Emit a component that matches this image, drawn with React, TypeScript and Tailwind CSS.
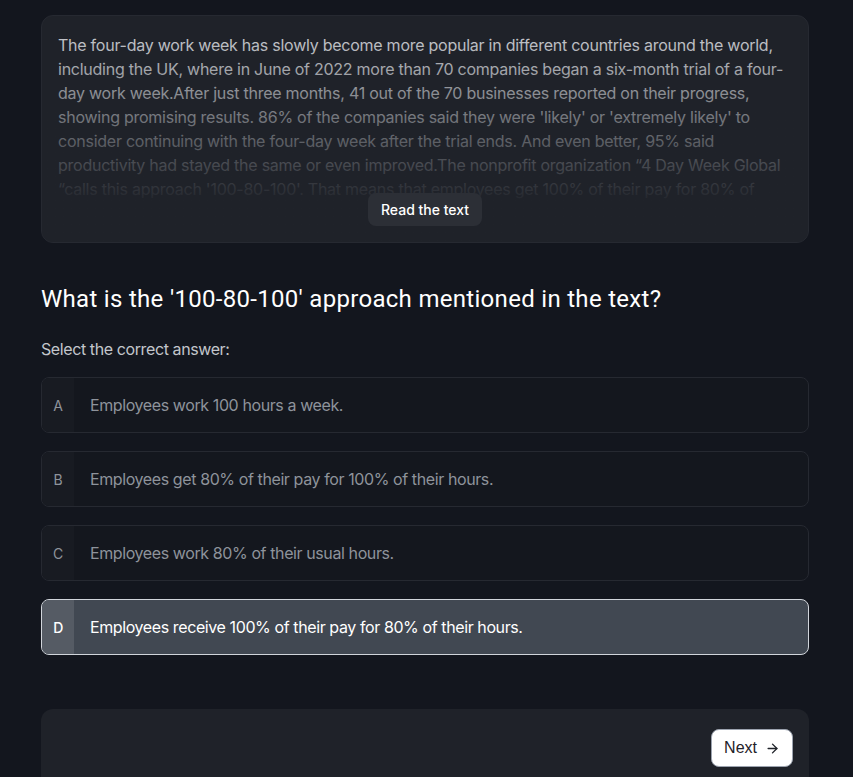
import React from "react";

const passageA =
  "The four-day work week has slowly become more popular in different countries around the world, including the UK, where in June of 2022 more than 70 companies began a six-month trial of a four-day work week.After just three months, 41 out of the 70 businesses reported on their progress, showing promising results. 86% of the companies said they were 'likely' or 'extremely likely' to consider continuing with the four-day week after the trial ends. And even better, 95% said productivity had stayed the same or even improved.The nonprofit organization \u201c4 Day Week Global \u201ccalls this approach '100-80-100'. That means that employees get 100% of their pay for 80% of";
const passageB =
  "their hours, while aiming for 100% productivity. Companies had to find different ways to avoid time off and meetings that were not needed.";

const options = [
  { k: "A", t: "Employees work 100 hours a week." },
  { k: "B", t: "Employees get 80% of their pay for 100% of their hours." },
  { k: "C", t: "Employees work 80% of their usual hours." },
  { k: "D", t: "Employees receive 100% of their pay for 80% of their hours.", sel: true },
];

export default function App() {
  return (
    <div
      className="min-h-[777px] bg-[#13161e] pt-[15px] tracking-[-0.4px]"
      style={{ fontFamily: "Inter, 'Noto Sans', sans-serif" }}
    >
      <div className="ml-[41px] w-[768px]">
        <div className="relative h-[228px] overflow-hidden rounded-xl border border-[#262931] bg-[#1f2229] px-4 pt-[17px]">
          <p className="text-[16px] leading-[24px] tracking-[-0.25px] text-[#caccd1]">
            {passageA}
            <br />
            {passageB}
          </p>
          <div className="absolute inset-0 bg-gradient-to-b from-[#1f222900] from-[6%] to-[#1f2229] to-[84%]" />
          <div className="absolute inset-x-0 bottom-[16px] flex justify-center">
            <button className="h-[33px] rounded-lg bg-[#2c2f36] px-[13px] text-[14px] font-medium tracking-normal text-white">
              Read the text
            </button>
          </div>
        </div>

        <h2
          className="mt-[40px] text-[24px] leading-[32px] tracking-[0.3px] text-white"
          style={{ fontFamily: "Roboto, 'Noto Sans', sans-serif" }}
        >
          What is the '100-80-100' approach mentioned in the text?
        </h2>
        <p className="mt-[22px] text-[16px] leading-[24px] text-[#c3c6cc]">Select the correct answer:</p>

        <div className="mt-[16px] flex flex-col gap-[18px]">
          {options.map((o) =>
            o.sel ? (
              <div
                key={o.k}
                className="flex h-[56px] overflow-hidden rounded-lg border border-[#d1d5db] bg-[#414852]"
              >
                <div className="flex w-[32px] items-center justify-center bg-[#555b64] text-[14px] font-medium text-white">
                  {o.k}
                </div>
                <div className="flex items-center pl-[16px] text-[16px] text-white">{o.t}</div>
              </div>
            ) : (
              <div
                key={o.k}
                className="flex h-[56px] overflow-hidden rounded-lg border border-[#262931] bg-[#14171e]"
              >
                <div className="flex w-[32px] items-center justify-center bg-[#181b22] text-[14px] text-[#8e939b]">
                  {o.k}
                </div>
                <div className="flex items-center pl-[16px] text-[16px] text-[#8e939b]">{o.t}</div>
              </div>
            )
          )}
        </div>

        <div className="mt-[54px] flex h-[90px] justify-end rounded-t-xl bg-[#1f2229] px-[16px] pt-[20px]">
          <button
            className="flex h-[38px] items-center gap-[8px] rounded-lg border border-[#9ca3af] bg-white px-[12px] text-[16px] tracking-normal text-[#1f2229]"
            style={{ fontFamily: "'Liberation Sans', Arial, sans-serif" }}
          >
            Next
            <svg width="15" height="15" viewBox="0 0 24 24" fill="none" stroke="currentColor" strokeWidth="2.2" strokeLinecap="round" strokeLinejoin="round">
              <path d="M5 12h14" />
              <path d="M12 5l7 7-7 7" />
            </svg>
          </button>
        </div>
      </div>
    </div>
  );
}
